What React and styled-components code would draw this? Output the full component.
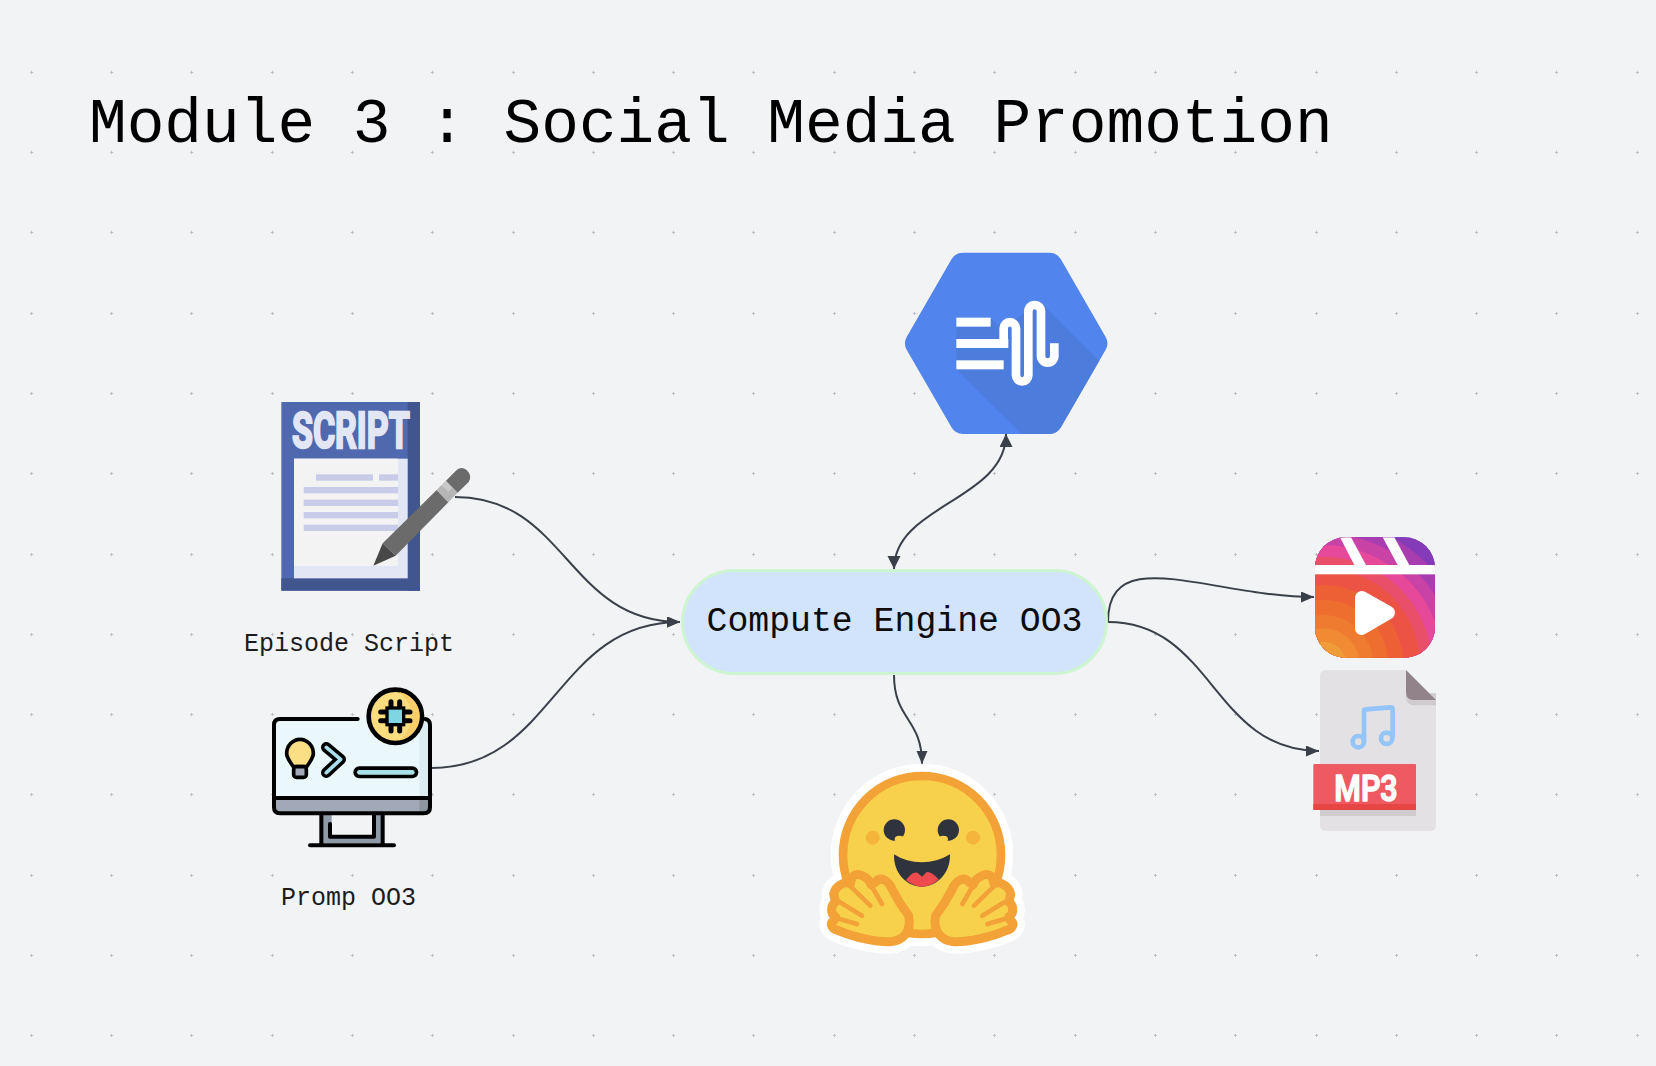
import styled, { createGlobalStyle } from 'styled-components';

const dotTile = encodeURIComponent(
  '<svg xmlns="http://www.w3.org/2000/svg" width="80.3" height="80.3"><path d="M38.55 40.15h3.2M40.15 38.55v3.2" stroke="#bcbec3" stroke-width="0.9" fill="none"/></svg>'
);

const GlobalStyle = createGlobalStyle`
  html, body {
    margin: 0;
    padding: 0;
    background: #f2f3f5;
  }
`;

const Board = styled.div`
  position: relative;
  width: 100%;
  height: 100vh;
  overflow: hidden;
  box-sizing: border-box;
  padding: 95px 0 0 89px;
  background-color: #f2f3f5;
  background-image: url("data:image/svg+xml,${dotTile}");
  background-size: 80.3px 80.3px;
  background-position: -8.85px 32.15px;
  font-family: "Liberation Mono", monospace;
`;

const Title = styled.h1`
  margin: 0;
  font-size: 62.8px;
  line-height: 1;
  font-weight: 400;
  color: #000;
  white-space: pre;
`;

const Edges = styled.svg`
  position: absolute;
  left: 0;
  top: 0;
  width: 1656px;
  height: 1066px;
`;

const Edge = styled.path`
  fill: none;
  stroke: #3a404a;
  stroke-width: 2;
`;

// free canvas nodes of the diagram
const Icon = styled.svg`
  position: absolute;
  left: ${p => p.$x}px;
  top: ${p => p.$y}px;
  width: ${p => p.$w}px;
  height: ${p => p.$h}px;
`;

const Caption = styled.div`
  position: absolute;
  left: ${p => p.$x}px;
  top: ${p => p.$y}px;
  font-size: 25px;
  line-height: 28px;
  color: #1c1c1c;
  white-space: pre;
`;

const EnginePill = styled.div`
  position: absolute;
  left: 681px;
  top: 569px;
  width: 427px;
  height: 106px;
  box-sizing: border-box;
  display: flex;
  align-items: center;
  justify-content: center;
  padding-bottom: 2px;
  border: 3px solid #cdf5d2;
  border-radius: 53px;
  background: #d2e3fc;
  color: #0c0c0c;
  font-size: 34.8px;
  white-space: pre;
`;

const ScriptIcon = () => (
  <Icon $x={230} $y={380} $w={260} $h={280} viewBox="0 0 780 840">
    <rect x="154" y="66" width="416" height="566" fill="#5069ae" />
    <rect x="533" y="66" width="37" height="566" fill="#41558f" />
    <rect x="154" y="595" width="416" height="37" fill="#41558f" />
    <text
      x="186"
      y="205"
      fontFamily='"Liberation Sans Narrow", "Roboto", sans-serif'
      fontWeight="700"
      fontSize="152"
      textLength="353"
      lengthAdjust="spacingAndGlyphs"
      fill="#e3e6f5"
      stroke="#e3e6f5"
      strokeWidth="7"
    >
      SCRIPT
    </text>
    <rect x="192" y="236" width="341" height="359" fill="#e3e6f5" />
    <rect x="192" y="236" width="312" height="322" fill="#f3f3f3" />
    <g fill="#c9cce8">
      <rect x="258" y="283" width="171" height="19" />
      <rect x="447" y="283" width="57" height="19" />
      <rect x="221" y="321" width="283" height="19" />
      <rect x="221" y="359" width="283" height="19" />
      <rect x="221" y="396" width="283" height="19" />
      <rect x="221" y="434" width="283" height="19" />
    </g>
    <path d="M458 490L620 330L655 367L497 527Z" fill="#6b6b6b" />
    <path d="M458 490L430 557L497 527Z" fill="#484848" />
    <path d="M620 330L648 302L683 338L655 367Z" fill="#b5b5b5" />
    <path d="M634 316L648 303L668 322L655 335Z" fill="#c9c9c9" />
    <path d="M648 302L680 270Q694 258 710 270Q728 288 716 306L683 338Z" fill="#6b6b6b" />
  </Icon>
);

const PromptIcon = () => (
  <Icon $x={240} $y={670} $w={220} $h={250} viewBox="0 0 660 750">
    <rect x="248" y="435" width="175" height="85" fill="#8e9aa8" />
    <rect x="275" y="435" width="122" height="60" fill="#f2f3f5" />
    <rect x="102" y="146" width="468" height="284" rx="18" fill="#eaf8fb" />
    <rect x="538" y="146" width="32" height="235" fill="#dcecf2" />
    <path d="M102 384H570V412Q570 430 552 430H120Q102 430 102 412Z" fill="#a1a9b8" />
    <path d="M538 384H570V412Q570 430 552 430H538Z" fill="#8e969f" />
    <g fill="none" stroke="#000" strokeWidth="12" strokeLinecap="round" strokeLinejoin="round">
      <path d="M353 147H120Q102 147 102 165V412Q102 430 120 430H552Q570 430 570 412V165Q570 150 556 147" />
      <path d="M102 384H570" />
      <path d="M244 435V525M428 435V525M210 526H462" />
      <path d="M270 462V500H402V435" />
    </g>
    <path
      d="M160 290C150 275 140 265 140 250A40 42 0 1 1 220 250C220 265 210 275 200 290Z"
      fill="#fbdf84"
      stroke="#000"
      strokeWidth="11"
      strokeLinejoin="round"
    />
    <rect x="161" y="290" width="38" height="32" rx="8" fill="#a1a9b8" stroke="#000" strokeWidth="11" />
    <g fill="none" strokeLinecap="round" strokeLinejoin="round">
      <path d="M259 232L302 268L259 308" stroke="#000" strokeWidth="32" />
      <path d="M259 232L302 268L259 308" stroke="#a8dfe8" strokeWidth="11" />
      <path d="M358 307H517" stroke="#000" strokeWidth="36" />
      <path d="M358 307H517" stroke="#a8dfe8" strokeWidth="14" />
    </g>
    <circle cx="466" cy="139" r="80" fill="#fbdc7e" stroke="#000" strokeWidth="14" />
    <path d="M478 67A73 73 0 0 1 478 211A90 90 0 0 0 478 67Z" fill="#f8cd6a" />
    <g stroke="#000" strokeWidth="15" strokeLinecap="round">
      <path d="M453 95V183M479 95V183M422 126H510M422 152H510" />
    </g>
    <rect x="441" y="114" width="50" height="50" fill="#7fd6e2" stroke="#000" strokeWidth="10" />
  </Icon>
);

const hexPath =
  'M249 38H508A40 40 0 0 1 542.6 58L676.6 290A40 40 0 0 1 676.6 330L542.6 562A40 40 0 0 1 508 582H249A40 40 0 0 1 214.4 562L80.4 330A40 40 0 0 1 80.4 290L214.4 58A40 40 0 0 1 249 38Z';

const SpeechIcon = () => (
  <Icon $x={880} $y={240} $w={240} $h={200} viewBox="0 0 720 600">
    <defs>
      <clipPath id="hexClip">
        <path d={hexPath} />
      </clipPath>
    </defs>
    <path d={hexPath} fill="#5185ed" />
    <path
      d="M495 200L720 425V620H463L229 388V235H332L372 275L400 240L480 195Z"
      fill="#4c7cdc"
      clipPath="url(#hexClip)"
    />
    <g fill="#fff">
      <rect x="229" y="233" width="103" height="27" />
      <rect x="229" y="297" width="156" height="27" />
      <rect x="229" y="361" width="142" height="27" />
    </g>
    <path
      d="M371 324V265A18.5 18.5 0 0 1 408 265V406A18.5 18.5 0 0 0 445 406V214A19 19 0 0 1 483 214V348A20 20 0 0 0 523 348V310"
      fill="none"
      stroke="#fff"
      strokeWidth="26"
    />
  </Icon>
);

const handPath =
  'M285 165C270 145 250 115 235 85C225 60 200 45 185 65L172 72C165 50 130 30 115 50L110 70C95 60 65 75 60 100L65 125C50 135 50 160 65 168L62 178C45 190 55 205 75 210C120 230 190 245 230 243C265 240 295 215 285 165Z';

const leftHand = 'translate(41 332)';
const rightHand = 'translate(733 0) scale(-1 1) translate(41 332)';

const HandLines = () => (
  <g fill="none" stroke="#f3a237" strokeWidth="14" strokeLinecap="round">
    <path d="M170 70L205 130" />
    <path d="M105 72L170 135" />
    <path d="M68 118L145 165" />
    <path d="M60 170L130 190" />
  </g>
);

const HuggingIcon = () => (
  <Icon $x={800} $y={750} $w={240} $h={215} viewBox="0 0 720 645">
    <g fill="#fff" stroke="#fff" strokeWidth="72" strokeLinejoin="round">
      <circle cx="366" cy="315" r="238" />
      <path d={handPath} transform={leftHand} />
      <path d={handPath} transform={rightHand} />
    </g>
    <circle cx="366" cy="315" r="237" fill="#f8d14c" stroke="#f3a237" strokeWidth="26" />
    <circle cx="218" cy="263" r="21" fill="#f5b43c" />
    <circle cx="519" cy="263" r="21" fill="#f5b43c" />
    <circle cx="283" cy="240" r="32" fill="#2f333d" />
    <circle cx="445" cy="240" r="32" fill="#2f333d" />
    <ellipse cx="298" cy="267" rx="14" ry="10" fill="#f8d14c" />
    <ellipse cx="430" cy="267" rx="14" ry="10" fill="#f8d14c" />
    <path d="M282 313C330 345 400 345 450 313C452 370 410 410 366 410C320 410 280 370 282 313Z" fill="#2f333d" />
    <path
      d="M318 390C330 375 340 365 352 368L366 380L380 366C395 365 405 378 416 388C400 405 380 410 366 410C350 410 332 402 318 390Z"
      fill="#ef4a4e"
    />
    <g transform={leftHand}>
      <path d={handPath} fill="#f8d14c" stroke="#f3a237" strokeWidth="27" strokeLinejoin="round" />
      <HandLines />
    </g>
    <g transform={rightHand}>
      <path d={handPath} fill="#f8d14c" stroke="#f3a237" strokeWidth="27" strokeLinejoin="round" />
      <HandLines />
    </g>
  </Icon>
);

// bands of the reels gradient, outermost first
const reelBands = [
  [520, '#6e39be'],
  [480, '#853ab8'],
  [435, '#a83db0'],
  [395, '#c942a5'],
  [360, '#e6489a'],
  [325, '#ea4f6a'],
  [290, '#ec5344'],
  [240, '#ed6035'],
  [195, '#ee6e30'],
  [150, '#ef7b30'],
  [110, '#f08a33'],
  [70, '#f09c38'],
];

const ReelsIcon = () => (
  <Icon $x={1290} $y={525} $w={160} $h={140} viewBox="0 0 480 420">
    <defs>
      <clipPath id="reelClip">
        <rect x="75" y="37" width="360" height="361" rx="92" />
      </clipPath>
    </defs>
    <g clipPath="url(#reelClip)">
      {reelBands.map(([r, color]) => (
        <circle key={r} cx="100" cy="420" r={r} fill={color} />
      ))}
      <rect x="75" y="120" width="360" height="28" fill="#fff" />
      <path d="M150 37H183L228 120H193Z" fill="#fff" />
      <path d="M278 37H313L358 120H323Z" fill="#fff" />
    </g>
    <path d="M215 218L295 263L215 310Z" fill="#fff" stroke="#fff" strokeWidth="40" strokeLinejoin="round" />
  </Icon>
);

const Mp3Icon = () => (
  <Icon $x={1290} $y={660} $w={160} $h={180} viewBox="0 0 480 540">
    <path
      d="M108 30H348L438 120V495Q438 513 420 513H108Q90 513 90 495V48Q90 30 108 30Z"
      fill="#e3e1e4"
    />
    <path d="M348 100H438V136H375Q348 136 348 110Z" fill="#cfcbcf" />
    <path d="M348 30L438 120H372Q348 120 348 96Z" fill="#918389" />
    <g fill="none" stroke="#94c5f8" strokeWidth="14" strokeLinejoin="round">
      <circle cx="205" cy="245" r="17" />
      <circle cx="290" cy="235" r="17" />
      <path d="M222 245V153Q222 148 228 148L302 142Q308 142 308 148V235" />
    </g>
    <rect x="90" y="450" width="288" height="18" fill="#cfcbcf" />
    <rect x="70" y="312" width="308" height="138" rx="3" fill="#ef5961" />
    <path d="M70 432H378V447Q378 450 375 450H73Q70 450 70 447Z" fill="#e84545" />
    <text
      x="133"
      y="422"
      fontFamily='"Roboto", "Liberation Sans", sans-serif'
      fontWeight="500"
      fontSize="113"
      textLength="190"
      lengthAdjust="spacingAndGlyphs"
      fill="#fff"
      stroke="#fff"
      strokeWidth="5"
      strokeLinejoin="round"
    >
      MP3
    </text>
  </Icon>
);

const App = () => (
  <Board>
    <GlobalStyle />
    <Title>Module 3 : Social Media Promotion</Title>

    <Edges viewBox="0 0 1656 1066">
      <defs>
        <marker id="head" markerUnits="userSpaceOnUse" markerWidth="14" markerHeight="12" refX="13" refY="5.5" orient="auto-start-reverse">
          <path d="M0 0L13 5.5L0 11Z" fill="#3a404a" />
        </marker>
        <marker id="headWide" markerUnits="userSpaceOnUse" markerWidth="14" markerHeight="14" refX="13" refY="6.5" orient="auto-start-reverse">
          <path d="M0 0L13 6.5L0 13Z" fill="#3a404a" />
        </marker>
      </defs>
      <Edge d="M455 497C567 497 567 622 680 622" markerEnd="url(#head)" />
      <Edge d="M431 768C555 768 555 622 680 622" markerEnd="url(#head)" />
      <Edge d="M894 569C894 505 1006 500 1006 434" markerStart="url(#headWide)" markerEnd="url(#headWide)" />
      <Edge d="M1108 622C1108 541 1211 597 1314 597" markerEnd="url(#head)" />
      <Edge d="M1108 622C1213 622 1213 751 1319 751" markerEnd="url(#head)" />
      <Edge d="M894 675C894 720 922 718 922 764" markerEnd="url(#head)" />
    </Edges>

    <ScriptIcon />
    <Caption $x={244} $y={631}>Episode Script</Caption>
    <PromptIcon />
    <Caption $x={281} $y={885}>Promp OO3</Caption>
    <EnginePill>Compute Engine OO3</EnginePill>
    <SpeechIcon />
    <HuggingIcon />
    <ReelsIcon />
    <Mp3Icon />
  </Board>
);

export default App;
